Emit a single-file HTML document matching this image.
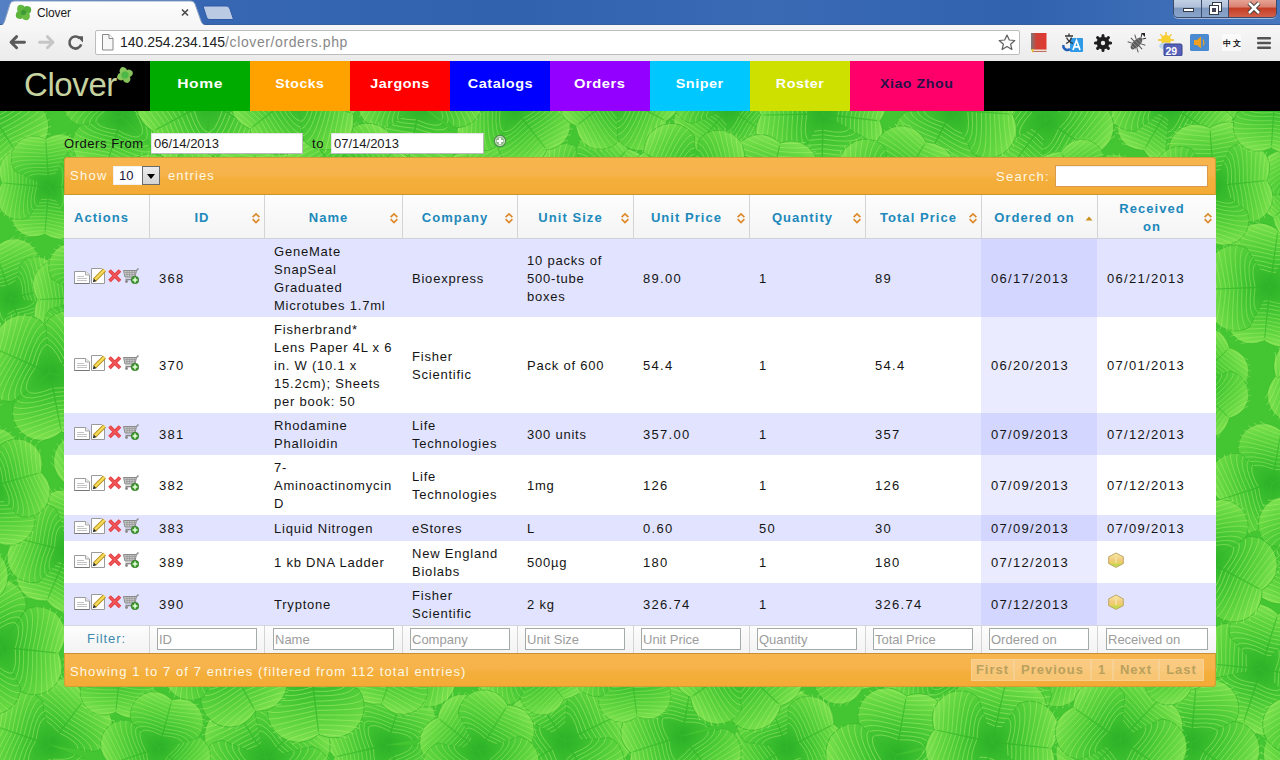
<!DOCTYPE html>
<html><head><meta charset="utf-8">
<style>
*{box-sizing:border-box;margin:0;padding:0}
html,body{width:1280px;height:760px;overflow:hidden;font-family:"Liberation Sans",sans-serif;}
body{position:relative;background:#57ce3b;}
.abs{position:absolute}
#frame{left:0;top:0;width:1280px;height:25px;background:linear-gradient(90deg,#5580c4 0%,#3868b4 12%,#3162ae 40%,#3a6ab4 60%,#3162ae 80%,#4676bd 100%);}
#toolbar{left:0;top:25px;width:1280px;height:36px;background:linear-gradient(#f7f7f7,#ebebeb);}
#omni{left:95px;top:30px;width:925px;height:25px;background:#fff;border:1px solid #bdbdbd;border-radius:2px;}
#url{left:120px;top:34px;font-size:14px;color:#222;white-space:nowrap;letter-spacing:0}
#url span{color:#888;letter-spacing:0.6px}
#nav{left:0;top:61px;width:1280px;height:50px;background:#000;}
.nav{position:absolute;top:61px;height:50px;width:100px;color:#fff;font-weight:bold;font-size:13px;text-align:center;line-height:45px;letter-spacing:0.5px;white-space:nowrap}
.nav span{display:inline-block}
#logo{left:24px;top:66px;font-size:33px;color:#c6d3a0;letter-spacing:-0.4px}
#bg{left:0;top:111px;width:1280px;height:649px;overflow:hidden;background:#57ce3b}
.t13{font-size:13px;letter-spacing:0.8px;white-space:nowrap}
.inp{background:#fff;border:1px solid #e4e4e4;border-right-color:#b8b8b8;border-bottom-color:#b8b8b8;font-size:13px;color:#1a1a1a;line-height:20px;padding-left:2px;white-space:nowrap}
.sel{background:#fff;border:1px solid #f0f0f0;font-size:13px;color:#111;line-height:17px}
.sel span{position:absolute;left:5px;top:0;color:#1a1040}
.sel i{position:absolute;right:-1px;top:-1px;width:18px;height:19px;background:linear-gradient(#ececec,#d4d4d4);border:1px solid #6a6a6a}
.sel i:after{content:"";position:absolute;left:4px;top:7px;border-left:4px solid transparent;border-right:4px solid transparent;border-top:5px solid #000}
.ohdr{background:linear-gradient(#f7b54e 0%,#f7b34b 45%,#f3ae3b 58%,#f4ab36 100%);border:1px solid #cfa035}
.wt{color:#fff8e4}
#tb{border-collapse:separate;border-spacing:0;table-layout:fixed;width:1152px;font-size:13px;color:#111}
#tb th{background:linear-gradient(#fdfdfd,#f4f4f4);color:#2088bb;font-weight:bold;border-left:1px solid #d3d3d8;border-bottom:1px solid #cfd0da;padding:0 0 0 10px;line-height:18px;text-align:center;vertical-align:middle;letter-spacing:1.05px;padding-top:1px;white-space:nowrap}
#tb th.f{border-left:none}
#tb .sw{position:relative;padding-right:20px;top:1px}
#tb .si,#tb .sa{position:absolute;right:0;top:50%;margin-top:-8px;width:16px;height:16px}
#tb td{padding:1px 10px 0 10px;line-height:18px;vertical-align:middle;letter-spacing:0.78px;white-space:nowrap;color:#141414}
#tb tr.odd td{background:#e2e4ff}
#tb tr.even td{background:#fff}
#tb tr.odd td.s1{background:#d3d6ff}
#tb tr.even td.s1{background:#eaebff}
#tb tfoot th{border-bottom:none;box-shadow:inset 0 1px 0 #d6d6de;background:linear-gradient(#fdfdfd,#f3f3f3);padding:0 0 0 7px;text-align:left}
#tb tfoot th.fl{font-weight:normal;color:#3d8ab0;text-align:center;padding:0;letter-spacing:0.9px}
#tb .fi{width:100px;height:22px;border:1px solid #a3aaa8;background:#fff;color:#9c9c9c;font-weight:normal;letter-spacing:0;font-size:13px;line-height:21px;padding-left:1px;border-radius:0}
#tb td.ic{padding:0 0 0 10px}
.icons{position:relative;top:-2px;height:16px;width:64px}
.icons svg{position:absolute;top:0}
.pg{height:22px;background:rgba(255,240,215,0.38);border:1px solid rgba(245,215,165,0.55);color:#b9a05c;font-weight:bold;font-size:13px;line-height:20px;text-align:center;letter-spacing:1px}
#tb td.n{letter-spacing:1.3px}
</style></head><body>
<!-- chrome frame -->
<div id="frame" class="abs"></div><div class="abs" style="left:0;top:24px;width:1280px;height:1px;background:#355f9e"></div>
<svg class="abs" style="left:0;top:0" width="240" height="26" viewBox="0 0 240 26">
<defs><linearGradient id="tabg" x1="0" y1="0" x2="0" y2="1"><stop offset="0" stop-color="#fdfdfd"/><stop offset="1" stop-color="#f6f6f6"/></linearGradient>
<linearGradient id="ntg" x1="0" y1="0" x2="0" y2="1"><stop offset="0" stop-color="#c5d6ec"/><stop offset="1" stop-color="#a9c0e0"/></linearGradient></defs>
<path d="M-1 26 C3 26 4 23 5 20 L10 4 C11 2 12 1 15 1 L190 1 C193 1 194 2 195 4 L201 21 C202 24 204 25.6 208 26 Z" fill="url(#tabg)" stroke="#8ea4c4" stroke-width="1"/>
<path d="M203 6 L226 6 C228 6 229 7 230 9 L233.5 19.5 L210 19.5 C208 19.5 207 18.5 206.5 17 Z" fill="#b9cae2" stroke="#2f5aa8" stroke-width="1"/>
<g transform="translate(23.5,12.5) rotate(12)"><circle cx="-3.2" cy="-3.2" r="3.9" fill="#62b83e"/><circle cx="3.2" cy="-3.2" r="3.9" fill="#56b03a"/><circle cx="-3.2" cy="3.2" r="3.9" fill="#5cb43c"/><circle cx="3.2" cy="3.2" r="3.9" fill="#68bc42"/><circle cx="0" cy="0" r="2.6" fill="#3e9a34"/></g>
<path d="M182 9.5l6 6M188 9.5l-6 6" stroke="#4a4a4a" stroke-width="1.6"/>
</svg>
<div class="abs" style="left:37px;top:6px;font-size:12px;color:#1a1a1a;letter-spacing:-0.15px">Clover</div>
<!-- window controls -->
<div class="abs" style="left:1173px;top:-1px;width:104px;height:19px;border:1px solid #3a4c6a;border-top:none;border-radius:0 0 5px 5px;overflow:hidden;box-shadow:0 1px 0 rgba(255,255,255,0.5)">
 <div class="abs" style="left:0;top:0;width:28px;height:18px;background:linear-gradient(#c6d3e6 0%,#aebfd8 45%,#7e98bf 50%,#8aa5cc 100%);border-right:1px solid #3a4c6a"></div>
 <div class="abs" style="left:28px;top:0;width:27px;height:18px;background:linear-gradient(#c6d3e6 0%,#aebfd8 45%,#7e98bf 50%,#8aa5cc 100%);border-right:1px solid #3a4c6a"></div>
 <div class="abs" style="left:55px;top:0;width:49px;height:18px;background:linear-gradient(#e8a89a 0%,#d98070 45%,#c43c24 50%,#d2604a 100%)"></div>
 <div class="abs" style="left:9px;top:9px;width:11px;height:4px;background:#fff;border:1px solid #333a48"></div>
 <div class="abs" style="left:39px;top:4px;width:8px;height:8px;border:2px solid #fff;outline:1px solid #333a48"></div>
 <div class="abs" style="left:36px;top:7px;width:8px;height:8px;border:2px solid #fff;background:#445;outline:1px solid #333a48"></div>
 <svg class="abs" style="left:72px;top:2px" width="16" height="14" viewBox="0 0 16 14"><path d="M3 2l10 10M13 2L3 12" stroke="#333" stroke-width="4.4"/><path d="M3 2l10 10M13 2L3 12" stroke="#fff" stroke-width="2.6"/></svg>
</div>
<!-- toolbar -->
<div id="toolbar" class="abs"></div>
<svg class="abs" style="left:0;top:25px" width="100" height="36" viewBox="0 0 100 36">
<path d="M11 17.2 L16.6 11.6 M11 17.2 L16.6 22.8 M11.5 17.2 H24.5" stroke="#5a5a5a" stroke-width="2.9" stroke-linecap="round" fill="none"/>
<path d="M53 17.2 L47.4 11.6 M53 17.2 L47.4 22.8 M52.5 17.2 H39.5" stroke="#c6c6c6" stroke-width="2.9" stroke-linecap="round" fill="none"/>
<path d="M81.2 19.3 A6 6 0 1 1 79.6 13.2" fill="none" stroke="#5a5a5a" stroke-width="2.6"/>
<path d="M76.6 11.2 L83 11.2 L83 17.4 Z" fill="#5a5a5a"/>
</svg>
<div id="omni" class="abs"></div>
<svg class="abs" style="left:100px;top:34px" width="16" height="18" viewBox="0 0 16 18"><path d="M2.5 0.5h6.5l4 4v11.5h-10.5z" fill="#f8f8f8" stroke="#8a8a8a"/><path d="M9 0.5v4h4" fill="#fff" stroke="#8a8a8a"/></svg>
<div id="url" class="abs">140.254.234.145<span>/clover/orders.php</span></div>
<svg class="abs" style="left:997px;top:33px" width="20" height="18" viewBox="0 0 20 18"><path d="M10 2 L12.3 7 L17.8 7.5 L13.6 11.2 L14.9 16.5 L10 13.6 L5.1 16.5 L6.4 11.2 L2.2 7.5 L7.7 7 Z" fill="#fcfcfc" stroke="#5e5e5e" stroke-width="1.2" stroke-linejoin="round"/></svg>
<svg class="abs" style="left:1025px;top:30px" width="255" height="26" viewBox="0 0 255 26">
<!-- red book -->
<defs><linearGradient id="bkg" x1="0" x2="1"><stop offset="0" stop-color="#7a7a7a"/><stop offset="0.35" stop-color="#d04036"/><stop offset="1" stop-color="#e03a30"/></linearGradient></defs>
<rect x="6" y="3" width="15.5" height="17" fill="url(#bkg)"/><rect x="8" y="19.5" width="13.5" height="1.6" fill="#f0e0d0"/><rect x="8" y="21" width="13.5" height="0.8" fill="#b05040"/><path d="M6 19l3 0l-1.5 4z" fill="#e8c030"/>
<!-- translate -->
<rect x="45" y="8" width="13" height="14" rx="1" fill="#2f9ae6"/><path d="M48 20L51.5 10.5L55 20M49.3 16.8h4.4" stroke="#fff" stroke-width="1.7" fill="none"/><path d="M40 6h8M44 3.5v3M41.5 7.5c1.5 3 3.5 5 6.5 6M46.5 7.5c-1 3-3 5-5.5 6" stroke="#333" stroke-width="1.3" fill="none"/><path d="M38.5 15a4 4 0 0 0 6.5 4" stroke="#1f5fb8" stroke-width="2.4" fill="none"/>
<!-- gear -->
<g transform="translate(78,13)"><circle r="6.3" fill="#1e1e1e"/><g stroke="#1e1e1e" stroke-width="3" stroke-linecap="round"><path d="M0 -7.6V7.6M-7.6 0H7.6M-5.4 -5.4L5.4 5.4M5.4 -5.4L-5.4 5.4"/></g><circle r="2.2" fill="#eee"/></g>
<!-- bug -->
<g transform="translate(111.5,13.5) rotate(-45)"><ellipse rx="7.5" ry="3.6" fill="#5a5a5a"/><path d="M-5 -3.5v7M-2 -3.6v7.2M1 -3.6v7.2M4 -3.2v6.4" stroke="#9a9a9a" stroke-width="0.8"/><path d="M-3 -3.5l-2 -4M0 -3.5l0 -4.5M3 -3.5l2 -4M-3 3.5l-2 4M0 3.5l0 4.5M3 3.5l2 4" stroke="#555" stroke-width="1"/><path d="M7.5 -1l3 -2M7.5 1l3 2" stroke="#333" stroke-width="1"/></g><path d="M116 3l4 0l0 4z" fill="#222"/>
<!-- weather -->
<g transform="translate(141,10)" stroke="#f5c020" stroke-width="1.3"><path d="M0 -8V8M-8 0H8M-5.6 -5.6L5.6 5.6M5.6 -5.6L-5.6 5.6"/></g><circle cx="141" cy="10" r="5" fill="#f8d030"/><ellipse cx="141" cy="16" rx="7" ry="3.5" fill="#bcd6ec"/><rect x="139" y="14" width="18" height="12" rx="1.5" fill="#5560b8" stroke="#3a3f8a" stroke-width="1"/><text x="140.5" y="24.5" font-size="10.5" font-weight="bold" fill="#fff" font-family="Liberation Sans">29</text>
<!-- speaker -->
<rect x="165" y="4" width="19" height="17" rx="1.5" fill="#4a8ad0"/><path d="M169 10h3l4-3.5v12l-4-3.5h-3z" fill="#f0a020"/><path d="M178 9.5c1.2 1.5 1.2 4.5 0 6" stroke="#f0a020" stroke-width="1.2" fill="none"/>
<!-- chinese -->
<rect x="197" y="4" width="19" height="17" fill="#fafafa"/><text x="198" y="16" font-size="8" font-weight="bold" fill="#111" font-family="Liberation Sans">中 文</text>
<!-- menu -->
<rect x="232" y="7" width="14" height="2.6" rx="1" fill="#545454"/><rect x="232" y="11.7" width="14" height="2.6" rx="1" fill="#545454"/><rect x="232" y="16.4" width="14" height="2.6" rx="1" fill="#545454"/>
</svg>
<!-- nav -->
<div id="nav" class="abs"></div>
<div id="logo" class="abs">Clover</div>
<svg class="abs" style="left:117px;top:67px" width="16" height="16" viewBox="0 0 16 16"><g transform="translate(8,8) rotate(22)"><circle cx="-3.2" cy="-3.2" r="3.6" fill="#8cc860"/><circle cx="3.2" cy="-3.2" r="3.6" fill="#86c45c"/><circle cx="-3.2" cy="3.2" r="3.6" fill="#8ac65e"/><circle cx="3.2" cy="3.2" r="3.6" fill="#84c25a"/><circle r="3.6" fill="#4cb848"/></g></svg>
<div class="nav" style="left:150px;width:100px;background:#00ab00;color:#fff"><span style="transform:scaleX(1.200)">Home</span></div>
<div class="nav" style="left:250px;width:100px;background:#ffa200;color:#fff"><span style="transform:scaleX(1.080)">Stocks</span></div>
<div class="nav" style="left:350px;width:100px;background:#ff0000;color:#fff"><span style="transform:scaleX(1.104)">Jargons</span></div>
<div class="nav" style="left:450px;width:100px;background:#0000ff;color:#fff"><span style="transform:scaleX(1.112)">Catalogs</span></div>
<div class="nav" style="left:550px;width:100px;background:#9400ff;color:#fff"><span style="transform:scaleX(1.130)">Orders</span></div>
<div class="nav" style="left:650px;width:100px;background:#00c8ff;color:#fff"><span style="transform:scaleX(1.106)">Sniper</span></div>
<div class="nav" style="left:750px;width:100px;background:#cde000;color:#fff"><span style="transform:scaleX(1.098)">Roster</span></div>
<div class="nav" style="left:850px;width:134px;background:#ff006a;color:#2a1048"><span style="transform:scaleX(1.090)">Xiao Zhou</span></div>
<svg class="abs" style="left:0;top:111px" width="1280" height="649" viewBox="0 111 1280 649">
<defs><radialGradient id="lf" cx="0.05" cy="0.5" r="1.05"><stop offset="0" stop-color="#2cb228"/><stop offset="0.4" stop-color="#46c834"/><stop offset="0.75" stop-color="#66d842"/><stop offset="1" stop-color="#8ae656"/></radialGradient><g id="lv"><path d="M0 0L32 -58A40 40 0 0 1 84 0A40 40 0 0 1 32 58Z" fill="url(#lf)" stroke="#38b82c" stroke-width="1"/><path d="M22 1Q28 31 19 36M28 1Q34 39 23 45M34 1Q40 45 29 53M41 1Q46 50 37 59M47 1Q53 54 46 63M53 1Q59 55 56 64M59 1Q66 54 66 63M65 1Q72 50 75 59M72 1Q78 45 83 53M78 1Q84 39 89 45M84 1Q90 31 93 36M22 -1Q28 -31 19 -36M28 -1Q34 -39 23 -45M34 -1Q40 -45 29 -53M41 -1Q46 -50 37 -59M47 -1Q53 -54 46 -63M53 -1Q59 -55 56 -64M59 -1Q66 -54 66 -63M65 -1Q72 -50 75 -59M72 -1Q78 -45 83 -53M78 -1Q84 -39 89 -45M84 -1Q90 -31 93 -36" fill="none" stroke="#aaf070" stroke-width="1.1" opacity="0.6"/><path d="M2 0H80" stroke="#34b42a" stroke-width="1.5" opacity="0.6"/></g></defs>
<rect x="0" y="111" width="1280" height="649" fill="#44c632"/>
<g transform="translate(387 745) rotate(55)"><use href="#lv" transform="rotate(7) scale(0.62)"/><use href="#lv" transform="rotate(112) scale(0.64)"/><use href="#lv" transform="rotate(232) scale(0.63)"/></g>
<g transform="translate(1270 287) rotate(274)"><use href="#lv" transform="rotate(4) scale(0.68)"/><use href="#lv" transform="rotate(82) scale(0.65)"/><use href="#lv" transform="rotate(182) scale(0.64)"/><use href="#lv" transform="rotate(264) scale(0.68)"/></g>
<g transform="translate(1031 655) rotate(295)"><use href="#lv" transform="rotate(3) scale(0.63)"/><use href="#lv" transform="rotate(86) scale(0.65)"/><use href="#lv" transform="rotate(188) scale(0.66)"/><use href="#lv" transform="rotate(276) scale(0.63)"/></g>
<g transform="translate(-57 378) rotate(179)"><use href="#lv" transform="rotate(5) scale(0.62)"/><use href="#lv" transform="rotate(114) scale(0.65)"/><use href="#lv" transform="rotate(232) scale(0.65)"/></g>
<g transform="translate(1272 483) rotate(279)"><use href="#lv" transform="rotate(1) scale(0.63)"/><use href="#lv" transform="rotate(117) scale(0.68)"/><use href="#lv" transform="rotate(243) scale(0.65)"/></g>
<g transform="translate(68 551) rotate(288)"><use href="#lv" transform="rotate(-4) scale(0.64)"/><use href="#lv" transform="rotate(86) scale(0.70)"/><use href="#lv" transform="rotate(185) scale(0.64)"/><use href="#lv" transform="rotate(266) scale(0.64)"/></g>
<g transform="translate(1014 186) rotate(238)"><use href="#lv" transform="rotate(-5) scale(0.59)"/><use href="#lv" transform="rotate(97) scale(0.59)"/><use href="#lv" transform="rotate(184) scale(0.61)"/><use href="#lv" transform="rotate(269) scale(0.60)"/></g>
<g transform="translate(729 108) rotate(131)"><use href="#lv" transform="rotate(-0) scale(0.61)"/><use href="#lv" transform="rotate(87) scale(0.60)"/><use href="#lv" transform="rotate(188) scale(0.62)"/><use href="#lv" transform="rotate(264) scale(0.59)"/></g>
<g transform="translate(1330 388) rotate(77)"><use href="#lv" transform="rotate(-3) scale(0.67)"/><use href="#lv" transform="rotate(115) scale(0.66)"/><use href="#lv" transform="rotate(239) scale(0.67)"/></g>
<g transform="translate(1261 669) rotate(190)"><use href="#lv" transform="rotate(-4) scale(0.67)"/><use href="#lv" transform="rotate(97) scale(0.68)"/><use href="#lv" transform="rotate(180) scale(0.65)"/><use href="#lv" transform="rotate(278) scale(0.69)"/></g>
<g transform="translate(947 666) rotate(52)"><use href="#lv" transform="rotate(5) scale(0.65)"/><use href="#lv" transform="rotate(129) scale(0.67)"/><use href="#lv" transform="rotate(235) scale(0.68)"/></g>
<g transform="translate(1153 485) rotate(118)"><use href="#lv" transform="rotate(10) scale(0.61)"/><use href="#lv" transform="rotate(88) scale(0.65)"/><use href="#lv" transform="rotate(175) scale(0.62)"/><use href="#lv" transform="rotate(276) scale(0.65)"/></g>
<g transform="translate(1191 743) rotate(268)"><use href="#lv" transform="rotate(7) scale(0.71)"/><use href="#lv" transform="rotate(126) scale(0.72)"/><use href="#lv" transform="rotate(240) scale(0.70)"/></g>
<g transform="translate(834 644) rotate(185)"><use href="#lv" transform="rotate(3) scale(0.64)"/><use href="#lv" transform="rotate(123) scale(0.63)"/><use href="#lv" transform="rotate(233) scale(0.63)"/></g>
<g transform="translate(1312 189) rotate(49)"><use href="#lv" transform="rotate(-8) scale(0.60)"/><use href="#lv" transform="rotate(95) scale(0.57)"/><use href="#lv" transform="rotate(183) scale(0.58)"/><use href="#lv" transform="rotate(270) scale(0.59)"/></g>
<g transform="translate(119 463) rotate(161)"><use href="#lv" transform="rotate(-2) scale(0.68)"/><use href="#lv" transform="rotate(125) scale(0.65)"/><use href="#lv" transform="rotate(237) scale(0.70)"/></g>
<g transform="translate(-15 104) rotate(301)"><use href="#lv" transform="rotate(-5) scale(0.72)"/><use href="#lv" transform="rotate(116) scale(0.73)"/><use href="#lv" transform="rotate(247) scale(0.67)"/></g>
<g transform="translate(1313 552) rotate(124)"><use href="#lv" transform="rotate(-3) scale(0.72)"/><use href="#lv" transform="rotate(126) scale(0.69)"/><use href="#lv" transform="rotate(246) scale(0.66)"/></g>
<g transform="translate(1170 105) rotate(123)"><use href="#lv" transform="rotate(-3) scale(0.62)"/><use href="#lv" transform="rotate(81) scale(0.66)"/><use href="#lv" transform="rotate(173) scale(0.65)"/><use href="#lv" transform="rotate(271) scale(0.67)"/></g>
<g transform="translate(-42 757) rotate(305)"><use href="#lv" transform="rotate(-7) scale(0.70)"/><use href="#lv" transform="rotate(112) scale(0.72)"/><use href="#lv" transform="rotate(236) scale(0.66)"/></g>
<g transform="translate(-10 487) rotate(78)"><use href="#lv" transform="rotate(6) scale(0.66)"/><use href="#lv" transform="rotate(95) scale(0.65)"/><use href="#lv" transform="rotate(175) scale(0.62)"/><use href="#lv" transform="rotate(266) scale(0.63)"/></g>
<g transform="translate(50 745) rotate(315)"><use href="#lv" transform="rotate(-8) scale(0.70)"/><use href="#lv" transform="rotate(128) scale(0.65)"/><use href="#lv" transform="rotate(244) scale(0.68)"/></g>
<g transform="translate(591 191) rotate(67)"><use href="#lv" transform="rotate(10) scale(0.70)"/><use href="#lv" transform="rotate(128) scale(0.63)"/><use href="#lv" transform="rotate(244) scale(0.66)"/></g>
<g transform="translate(1326 742) rotate(327)"><use href="#lv" transform="rotate(1) scale(0.65)"/><use href="#lv" transform="rotate(96) scale(0.70)"/><use href="#lv" transform="rotate(171) scale(0.67)"/><use href="#lv" transform="rotate(263) scale(0.70)"/></g>
<g transform="translate(1193 383) rotate(227)"><use href="#lv" transform="rotate(9) scale(0.63)"/><use href="#lv" transform="rotate(89) scale(0.60)"/><use href="#lv" transform="rotate(177) scale(0.60)"/><use href="#lv" transform="rotate(268) scale(0.59)"/></g>
<g transform="translate(1214 186) rotate(270)"><use href="#lv" transform="rotate(-4) scale(0.69)"/><use href="#lv" transform="rotate(84) scale(0.63)"/><use href="#lv" transform="rotate(188) scale(0.63)"/><use href="#lv" transform="rotate(268) scale(0.65)"/></g>
<g transform="translate(49 187) rotate(94)"><use href="#lv" transform="rotate(1) scale(0.56)"/><use href="#lv" transform="rotate(91) scale(0.56)"/><use href="#lv" transform="rotate(172) scale(0.57)"/><use href="#lv" transform="rotate(265) scale(0.58)"/></g>
<g transform="translate(122 117) rotate(105)"><use href="#lv" transform="rotate(3) scale(0.64)"/><use href="#lv" transform="rotate(125) scale(0.66)"/><use href="#lv" transform="rotate(236) scale(0.65)"/></g>
<g transform="translate(823 114) rotate(268)"><use href="#lv" transform="rotate(5) scale(0.71)"/><use href="#lv" transform="rotate(99) scale(0.68)"/><use href="#lv" transform="rotate(183) scale(0.74)"/><use href="#lv" transform="rotate(271) scale(0.74)"/></g>
<g transform="translate(208 102) rotate(34)"><use href="#lv" transform="rotate(-5) scale(0.76)"/><use href="#lv" transform="rotate(118) scale(0.74)"/><use href="#lv" transform="rotate(235) scale(0.71)"/></g>
<g transform="translate(957 827) rotate(312)"><use href="#lv" transform="rotate(3) scale(0.65)"/><use href="#lv" transform="rotate(116) scale(0.72)"/><use href="#lv" transform="rotate(234) scale(0.68)"/></g>
<g transform="translate(11 298) rotate(251)"><use href="#lv" transform="rotate(1) scale(0.62)"/><use href="#lv" transform="rotate(96) scale(0.56)"/><use href="#lv" transform="rotate(179) scale(0.58)"/><use href="#lv" transform="rotate(274) scale(0.60)"/></g>
<g transform="translate(173 212) rotate(94)"><use href="#lv" transform="rotate(-1) scale(0.65)"/><use href="#lv" transform="rotate(116) scale(0.68)"/><use href="#lv" transform="rotate(234) scale(0.71)"/></g>
<g transform="translate(488 200) rotate(357)"><use href="#lv" transform="rotate(3) scale(0.68)"/><use href="#lv" transform="rotate(120) scale(0.65)"/><use href="#lv" transform="rotate(248) scale(0.61)"/></g>
<g transform="translate(1046 120) rotate(130)"><use href="#lv" transform="rotate(-3) scale(0.72)"/><use href="#lv" transform="rotate(81) scale(0.74)"/><use href="#lv" transform="rotate(189) scale(0.70)"/><use href="#lv" transform="rotate(264) scale(0.71)"/></g>
<g transform="translate(400 653) rotate(287)"><use href="#lv" transform="rotate(5) scale(0.65)"/><use href="#lv" transform="rotate(92) scale(0.69)"/><use href="#lv" transform="rotate(183) scale(0.64)"/><use href="#lv" transform="rotate(279) scale(0.71)"/></g>
<g transform="translate(514 108) rotate(173)"><use href="#lv" transform="rotate(2) scale(0.64)"/><use href="#lv" transform="rotate(118) scale(0.69)"/><use href="#lv" transform="rotate(239) scale(0.63)"/></g>
<g transform="translate(787 748) rotate(60)"><use href="#lv" transform="rotate(2) scale(0.65)"/><use href="#lv" transform="rotate(89) scale(0.63)"/><use href="#lv" transform="rotate(189) scale(0.63)"/><use href="#lv" transform="rotate(273) scale(0.62)"/></g>
<g transform="translate(88 297) rotate(185)"><use href="#lv" transform="rotate(-8) scale(0.60)"/><use href="#lv" transform="rotate(82) scale(0.60)"/><use href="#lv" transform="rotate(183) scale(0.61)"/><use href="#lv" transform="rotate(276) scale(0.61)"/></g>
<g transform="translate(1209 562) rotate(30)"><use href="#lv" transform="rotate(-2) scale(0.71)"/><use href="#lv" transform="rotate(130) scale(0.69)"/><use href="#lv" transform="rotate(235) scale(0.67)"/></g>
<g transform="translate(253 211) rotate(179)"><use href="#lv" transform="rotate(-8) scale(0.65)"/><use href="#lv" transform="rotate(93) scale(0.69)"/><use href="#lv" transform="rotate(185) scale(0.69)"/><use href="#lv" transform="rotate(276) scale(0.65)"/></g>
<g transform="translate(266 758) rotate(232)"><use href="#lv" transform="rotate(6) scale(0.71)"/><use href="#lv" transform="rotate(85) scale(0.69)"/><use href="#lv" transform="rotate(175) scale(0.72)"/><use href="#lv" transform="rotate(269) scale(0.72)"/></g>
<g transform="translate(420 105) rotate(333)"><use href="#lv" transform="rotate(-2) scale(0.65)"/><use href="#lv" transform="rotate(129) scale(0.70)"/><use href="#lv" transform="rotate(234) scale(0.65)"/></g>
<g transform="translate(896 755) rotate(284)"><use href="#lv" transform="rotate(-4) scale(0.71)"/><use href="#lv" transform="rotate(129) scale(0.68)"/><use href="#lv" transform="rotate(235) scale(0.73)"/></g>
<g transform="translate(121 662) rotate(327)"><use href="#lv" transform="rotate(-1) scale(0.64)"/><use href="#lv" transform="rotate(129) scale(0.60)"/><use href="#lv" transform="rotate(235) scale(0.60)"/></g>
<g transform="translate(992 742) rotate(282)"><use href="#lv" transform="rotate(1) scale(0.74)"/><use href="#lv" transform="rotate(84) scale(0.71)"/><use href="#lv" transform="rotate(181) scale(0.74)"/><use href="#lv" transform="rotate(270) scale(0.70)"/></g>
<g transform="translate(311 670) rotate(325)"><use href="#lv" transform="rotate(-7) scale(0.75)"/><use href="#lv" transform="rotate(118) scale(0.77)"/><use href="#lv" transform="rotate(249) scale(0.72)"/></g>
<g transform="translate(349 188) rotate(150)"><use href="#lv" transform="rotate(-4) scale(0.68)"/><use href="#lv" transform="rotate(83) scale(0.73)"/><use href="#lv" transform="rotate(171) scale(0.72)"/><use href="#lv" transform="rotate(272) scale(0.73)"/></g>
<g transform="translate(1275 95) rotate(204)"><use href="#lv" transform="rotate(-4) scale(0.56)"/><use href="#lv" transform="rotate(122) scale(0.58)"/><use href="#lv" transform="rotate(250) scale(0.63)"/></g>
<g transform="translate(-0 647) rotate(248)"><use href="#lv" transform="rotate(-5) scale(0.71)"/><use href="#lv" transform="rotate(118) scale(0.70)"/><use href="#lv" transform="rotate(237) scale(0.71)"/></g>
<g transform="translate(565 741) rotate(235)"><use href="#lv" transform="rotate(1) scale(0.66)"/><use href="#lv" transform="rotate(99) scale(0.70)"/><use href="#lv" transform="rotate(182) scale(0.68)"/><use href="#lv" transform="rotate(274) scale(0.71)"/></g>
<g transform="translate(50 373) rotate(328)"><use href="#lv" transform="rotate(-5) scale(0.70)"/><use href="#lv" transform="rotate(111) scale(0.71)"/><use href="#lv" transform="rotate(236) scale(0.71)"/></g>
<g transform="translate(159 748) rotate(47)"><use href="#lv" transform="rotate(-7) scale(0.55)"/><use href="#lv" transform="rotate(115) scale(0.61)"/><use href="#lv" transform="rotate(238) scale(0.59)"/></g>
<g transform="translate(682 736) rotate(285)"><use href="#lv" transform="rotate(-5) scale(0.65)"/><use href="#lv" transform="rotate(126) scale(0.66)"/><use href="#lv" transform="rotate(237) scale(0.64)"/></g>
<g transform="translate(768 200) rotate(282)"><use href="#lv" transform="rotate(-0) scale(0.69)"/><use href="#lv" transform="rotate(97) scale(0.66)"/><use href="#lv" transform="rotate(183) scale(0.66)"/><use href="#lv" transform="rotate(263) scale(0.68)"/></g>
<g transform="translate(1084 195) rotate(233)"><use href="#lv" transform="rotate(9) scale(0.58)"/><use href="#lv" transform="rotate(121) scale(0.60)"/><use href="#lv" transform="rotate(235) scale(0.64)"/></g>
<g transform="translate(737 665) rotate(52)"><use href="#lv" transform="rotate(-9) scale(0.71)"/><use href="#lv" transform="rotate(93) scale(0.67)"/><use href="#lv" transform="rotate(188) scale(0.71)"/><use href="#lv" transform="rotate(264) scale(0.73)"/></g>
<g transform="translate(1120 740) rotate(307)"><use href="#lv" transform="rotate(7) scale(0.68)"/><use href="#lv" transform="rotate(87) scale(0.70)"/><use href="#lv" transform="rotate(189) scale(0.69)"/><use href="#lv" transform="rotate(268) scale(0.68)"/></g>
<g transform="translate(-63 574) rotate(295)"><use href="#lv" transform="rotate(7) scale(0.70)"/><use href="#lv" transform="rotate(91) scale(0.74)"/><use href="#lv" transform="rotate(175) scale(0.71)"/><use href="#lv" transform="rotate(273) scale(0.72)"/></g>
<g transform="translate(617 95) rotate(147)"><use href="#lv" transform="rotate(-4) scale(0.61)"/><use href="#lv" transform="rotate(110) scale(0.64)"/><use href="#lv" transform="rotate(241) scale(0.66)"/></g>
<g transform="translate(1162 648) rotate(56)"><use href="#lv" transform="rotate(-1) scale(0.60)"/><use href="#lv" transform="rotate(127) scale(0.60)"/><use href="#lv" transform="rotate(239) scale(0.61)"/></g>
<g transform="translate(535 661) rotate(53)"><use href="#lv" transform="rotate(0) scale(0.57)"/><use href="#lv" transform="rotate(120) scale(0.64)"/><use href="#lv" transform="rotate(250) scale(0.60)"/></g>
<g transform="translate(693 182) rotate(96)"><use href="#lv" transform="rotate(-4) scale(0.64)"/><use href="#lv" transform="rotate(115) scale(0.68)"/><use href="#lv" transform="rotate(243) scale(0.65)"/></g>
<g transform="translate(952 110) rotate(120)"><use href="#lv" transform="rotate(-3) scale(0.69)"/><use href="#lv" transform="rotate(124) scale(0.71)"/><use href="#lv" transform="rotate(244) scale(0.72)"/></g>
<g transform="translate(896 190) rotate(292)"><use href="#lv" transform="rotate(10) scale(0.67)"/><use href="#lv" transform="rotate(94) scale(0.64)"/><use href="#lv" transform="rotate(182) scale(0.63)"/><use href="#lv" transform="rotate(262) scale(0.68)"/></g>
<g transform="translate(226 658) rotate(291)"><use href="#lv" transform="rotate(7) scale(0.72)"/><use href="#lv" transform="rotate(130) scale(0.72)"/><use href="#lv" transform="rotate(250) scale(0.68)"/></g>
<g transform="translate(296 93) rotate(136)"><use href="#lv" transform="rotate(6) scale(0.69)"/><use href="#lv" transform="rotate(126) scale(0.68)"/><use href="#lv" transform="rotate(244) scale(0.72)"/></g>
<g transform="translate(479 751) rotate(216)"><use href="#lv" transform="rotate(3) scale(0.63)"/><use href="#lv" transform="rotate(86) scale(0.64)"/><use href="#lv" transform="rotate(185) scale(0.64)"/><use href="#lv" transform="rotate(274) scale(0.63)"/></g>
<g transform="translate(631 668) rotate(75)"><use href="#lv" transform="rotate(8) scale(0.58)"/><use href="#lv" transform="rotate(122) scale(0.61)"/><use href="#lv" transform="rotate(242) scale(0.58)"/></g>
</svg>
<!-- orders from -->
<div class="abs t13" style="left:64px;top:135px;line-height:18px;color:#111;letter-spacing:0.55px">Orders From</div>
<div class="abs inp" style="left:151px;top:133px;width:152px;height:21px"><span>06/14/2013</span></div>
<div class="abs t13" style="left:312px;top:135px;line-height:18px;color:#111;letter-spacing:0.55px">to</div>
<div class="abs inp" style="left:331px;top:133px;width:153px;height:21px"><span>07/14/2013</span></div>
<svg class="abs" style="left:493px;top:134px" width="14" height="14" viewBox="0 0 14 14"><circle cx="7" cy="7" r="5.6" fill="#8fb68a" stroke="#4f8a4a" stroke-width="1.2"/><circle cx="7" cy="7" r="4.6" fill="none" stroke="#d8ecd4" stroke-width="0.8"/><path d="M7 3.8v6.4M3.8 7h6.4" stroke="#fff" stroke-width="2.2"/></svg>

<!-- top toolbar orange -->
<div class="abs ohdr" style="left:64px;top:157px;width:1152px;height:38px;border-radius:3px 3px 0 0;border-bottom-color:#c69830"></div>
<div class="abs t13 wt" style="left:70px;top:167px;line-height:18px;letter-spacing:1.3px">Show</div>
<div class="abs sel" style="left:113px;top:166px;width:47px;height:19px"><span>10</span><i></i></div>
<div class="abs t13 wt" style="left:168px;top:167px;line-height:18px;letter-spacing:1.13px">entries</div>
<div class="abs t13 wt" style="left:996px;top:168px;line-height:18px;letter-spacing:1.32px">Search:</div>
<div class="abs" style="left:1055px;top:165px;width:153px;height:22px;background:#fff;border:1px solid #d99a4a;box-shadow:inset 0 1px 1px #eee"></div>

<!-- table -->
<table id="tb" class="abs" style="left:64px;top:195px">
<colgroup><col style="width:85px"><col style="width:115px"><col style="width:138px"><col style="width:115px"><col style="width:116px"><col style="width:116px"><col style="width:116px"><col style="width:116px"><col style="width:116px"><col style="width:119px"></colgroup>
<thead><tr style="height:44px">
<th class="f"><div class="sw" style="padding-right:20px"><span class="ht">Actions</span></div></th>
<th><div class="sw"><span class="ht">ID</span><svg class="si" width="16" height="16" viewBox="0 0 16 16"><path d="M4.6 7.2L8 3.9L11.4 7.2M4.6 9.2L8 12.5L11.4 9.2" fill="none" stroke="#dd8a2a" stroke-width="1.7"/></svg></div></th>
<th><div class="sw"><span class="ht" style="transform:scaleX(1.17)">Name</span><svg class="si" width="16" height="16" viewBox="0 0 16 16"><path d="M4.6 7.2L8 3.9L11.4 7.2M4.6 9.2L8 12.5L11.4 9.2" fill="none" stroke="#dd8a2a" stroke-width="1.7"/></svg></div></th>
<th><div class="sw"><span class="ht">Company</span><svg class="si" width="16" height="16" viewBox="0 0 16 16"><path d="M4.6 7.2L8 3.9L11.4 7.2M4.6 9.2L8 12.5L11.4 9.2" fill="none" stroke="#dd8a2a" stroke-width="1.7"/></svg></div></th>
<th><div class="sw"><span class="ht">Unit Size</span><svg class="si" width="16" height="16" viewBox="0 0 16 16"><path d="M4.6 7.2L8 3.9L11.4 7.2M4.6 9.2L8 12.5L11.4 9.2" fill="none" stroke="#dd8a2a" stroke-width="1.7"/></svg></div></th>
<th><div class="sw"><span class="ht" style="transform:scaleX(1.09)">Unit Price</span><svg class="si" width="16" height="16" viewBox="0 0 16 16"><path d="M4.6 7.2L8 3.9L11.4 7.2M4.6 9.2L8 12.5L11.4 9.2" fill="none" stroke="#dd8a2a" stroke-width="1.7"/></svg></div></th>
<th><div class="sw"><span class="ht">Quantity</span><svg class="si" width="16" height="16" viewBox="0 0 16 16"><path d="M4.6 7.2L8 3.9L11.4 7.2M4.6 9.2L8 12.5L11.4 9.2" fill="none" stroke="#dd8a2a" stroke-width="1.7"/></svg></div></th>
<th><div class="sw"><span class="ht">Total Price</span><svg class="si" width="16" height="16" viewBox="0 0 16 16"><path d="M4.6 7.2L8 3.9L11.4 7.2M4.6 9.2L8 12.5L11.4 9.2" fill="none" stroke="#dd8a2a" stroke-width="1.7"/></svg></div></th>
<th><div class="sw"><span class="ht">Ordered on</span><svg class="sa" width="16" height="16" viewBox="0 0 16 16"><path d="M4.5 10.5L8 6.5L11.5 10.5Z" fill="#c9901c"/></svg></div></th>
<th><div class="sw"><span class="ht">Received<br>on</span><svg class="si" width="16" height="16" viewBox="0 0 16 16"><path d="M4.6 7.2L8 3.9L11.4 7.2M4.6 9.2L8 12.5L11.4 9.2" fill="none" stroke="#dd8a2a" stroke-width="1.7"/></svg></div></th>
</tr></thead>
<tbody>
<tr class="odd" style="height:78px"><td class="ic"><div class="icons">
<svg style="left:0" width="16" height="16" viewBox="0 0 16 16"><path d="M0.5 3.5h11l4 3.5v8.5h-15z" fill="#fff" stroke="#9a9a9a"/><path d="M11.5 3.5v3.5h4" fill="#eee" stroke="#aaa"/><path d="M0.5 15.5h15" stroke="#777"/><path d="M3 8.5h7M3 10.5h10M3 12.5h10" stroke="#c4c4c4"/></svg>
<svg style="left:17px" width="16" height="16" viewBox="0 0 16 16"><path d="M0.5 0.5h10l3 3v12h-13z" fill="#fff" stroke="#9a9a9a"/><path d="M3.5 12L13.5 2" stroke="#b8901c" stroke-width="4.2"/><path d="M3.5 12L13.5 2" stroke="#f6dc5a" stroke-width="2.4"/><path d="M1.8 14.2L2.8 10.6L5.4 13.2Z" fill="#2a2a2a"/></svg>
<svg style="left:33px" width="16" height="16" viewBox="0 0 16 16"><path d="M2.5 2.5L13 13M13 2.5L2.5 13" stroke="#e33b40" stroke-width="3.6"/><path d="M2.5 2.5L13 13M13 2.5L2.5 13" stroke="#f25a5a" stroke-width="1.5"/></svg>
<svg style="left:49px" width="16" height="16" viewBox="0 0 16 16"><path d="M0.5 2.5h13l-1.5 6.5h-10z" fill="#c8c8c8" stroke="#8a8a8a"/><path d="M2 4.5h11M2.5 6.5h10M4 3v6M6.5 3v6M9 3v6M11.5 3v6" stroke="#9a9a9a" stroke-width="0.8"/><path d="M13.5 2.5l2-2" stroke="#8a8a8a" stroke-width="1.4"/><path d="M2.5 11.5h8" stroke="#8a8a8a" stroke-width="1.6"/><circle cx="3.5" cy="13.5" r="1.4" fill="#888"/><circle cx="12" cy="12" r="3.8" fill="#3d9a2c" stroke="#2a6a20" stroke-width="0.6"/><path d="M12 9.6v4.8M9.6 12h4.8" stroke="#e8ffe0" stroke-width="1.5"/></svg>
</div></td><td class="n">368</td><td>GeneMate<br>SnapSeal<br>Graduated<br>Microtubes 1.7ml</td><td>Bioexpress</td><td>10 packs of<br>500-tube<br>boxes</td><td class="n">89.00</td><td class="n">1</td><td class="n">89</td><td class="n s1">06/17/2013</td><td class="n">06/21/2013</td></tr>
<tr class="even" style="height:96px"><td class="ic"><div class="icons">
<svg style="left:0" width="16" height="16" viewBox="0 0 16 16"><path d="M0.5 3.5h11l4 3.5v8.5h-15z" fill="#fff" stroke="#9a9a9a"/><path d="M11.5 3.5v3.5h4" fill="#eee" stroke="#aaa"/><path d="M0.5 15.5h15" stroke="#777"/><path d="M3 8.5h7M3 10.5h10M3 12.5h10" stroke="#c4c4c4"/></svg>
<svg style="left:17px" width="16" height="16" viewBox="0 0 16 16"><path d="M0.5 0.5h10l3 3v12h-13z" fill="#fff" stroke="#9a9a9a"/><path d="M3.5 12L13.5 2" stroke="#b8901c" stroke-width="4.2"/><path d="M3.5 12L13.5 2" stroke="#f6dc5a" stroke-width="2.4"/><path d="M1.8 14.2L2.8 10.6L5.4 13.2Z" fill="#2a2a2a"/></svg>
<svg style="left:33px" width="16" height="16" viewBox="0 0 16 16"><path d="M2.5 2.5L13 13M13 2.5L2.5 13" stroke="#e33b40" stroke-width="3.6"/><path d="M2.5 2.5L13 13M13 2.5L2.5 13" stroke="#f25a5a" stroke-width="1.5"/></svg>
<svg style="left:49px" width="16" height="16" viewBox="0 0 16 16"><path d="M0.5 2.5h13l-1.5 6.5h-10z" fill="#c8c8c8" stroke="#8a8a8a"/><path d="M2 4.5h11M2.5 6.5h10M4 3v6M6.5 3v6M9 3v6M11.5 3v6" stroke="#9a9a9a" stroke-width="0.8"/><path d="M13.5 2.5l2-2" stroke="#8a8a8a" stroke-width="1.4"/><path d="M2.5 11.5h8" stroke="#8a8a8a" stroke-width="1.6"/><circle cx="3.5" cy="13.5" r="1.4" fill="#888"/><circle cx="12" cy="12" r="3.8" fill="#3d9a2c" stroke="#2a6a20" stroke-width="0.6"/><path d="M12 9.6v4.8M9.6 12h4.8" stroke="#e8ffe0" stroke-width="1.5"/></svg>
</div></td><td class="n">370</td><td>Fisherbrand*<br>Lens Paper 4L x 6<br>in. W (10.1 x<br>15.2cm); Sheets<br>per book: 50</td><td>Fisher<br>Scientific</td><td>Pack of 600</td><td class="n">54.4</td><td class="n">1</td><td class="n">54.4</td><td class="n s1">06/20/2013</td><td class="n">07/01/2013</td></tr>
<tr class="odd" style="height:42px"><td class="ic"><div class="icons">
<svg style="left:0" width="16" height="16" viewBox="0 0 16 16"><path d="M0.5 3.5h11l4 3.5v8.5h-15z" fill="#fff" stroke="#9a9a9a"/><path d="M11.5 3.5v3.5h4" fill="#eee" stroke="#aaa"/><path d="M0.5 15.5h15" stroke="#777"/><path d="M3 8.5h7M3 10.5h10M3 12.5h10" stroke="#c4c4c4"/></svg>
<svg style="left:17px" width="16" height="16" viewBox="0 0 16 16"><path d="M0.5 0.5h10l3 3v12h-13z" fill="#fff" stroke="#9a9a9a"/><path d="M3.5 12L13.5 2" stroke="#b8901c" stroke-width="4.2"/><path d="M3.5 12L13.5 2" stroke="#f6dc5a" stroke-width="2.4"/><path d="M1.8 14.2L2.8 10.6L5.4 13.2Z" fill="#2a2a2a"/></svg>
<svg style="left:33px" width="16" height="16" viewBox="0 0 16 16"><path d="M2.5 2.5L13 13M13 2.5L2.5 13" stroke="#e33b40" stroke-width="3.6"/><path d="M2.5 2.5L13 13M13 2.5L2.5 13" stroke="#f25a5a" stroke-width="1.5"/></svg>
<svg style="left:49px" width="16" height="16" viewBox="0 0 16 16"><path d="M0.5 2.5h13l-1.5 6.5h-10z" fill="#c8c8c8" stroke="#8a8a8a"/><path d="M2 4.5h11M2.5 6.5h10M4 3v6M6.5 3v6M9 3v6M11.5 3v6" stroke="#9a9a9a" stroke-width="0.8"/><path d="M13.5 2.5l2-2" stroke="#8a8a8a" stroke-width="1.4"/><path d="M2.5 11.5h8" stroke="#8a8a8a" stroke-width="1.6"/><circle cx="3.5" cy="13.5" r="1.4" fill="#888"/><circle cx="12" cy="12" r="3.8" fill="#3d9a2c" stroke="#2a6a20" stroke-width="0.6"/><path d="M12 9.6v4.8M9.6 12h4.8" stroke="#e8ffe0" stroke-width="1.5"/></svg>
</div></td><td class="n">381</td><td>Rhodamine<br>Phalloidin</td><td>Life<br>Technologies</td><td>300 units</td><td class="n">357.00</td><td class="n">1</td><td class="n">357</td><td class="n s1">07/09/2013</td><td class="n">07/12/2013</td></tr>
<tr class="even" style="height:60px"><td class="ic"><div class="icons">
<svg style="left:0" width="16" height="16" viewBox="0 0 16 16"><path d="M0.5 3.5h11l4 3.5v8.5h-15z" fill="#fff" stroke="#9a9a9a"/><path d="M11.5 3.5v3.5h4" fill="#eee" stroke="#aaa"/><path d="M0.5 15.5h15" stroke="#777"/><path d="M3 8.5h7M3 10.5h10M3 12.5h10" stroke="#c4c4c4"/></svg>
<svg style="left:17px" width="16" height="16" viewBox="0 0 16 16"><path d="M0.5 0.5h10l3 3v12h-13z" fill="#fff" stroke="#9a9a9a"/><path d="M3.5 12L13.5 2" stroke="#b8901c" stroke-width="4.2"/><path d="M3.5 12L13.5 2" stroke="#f6dc5a" stroke-width="2.4"/><path d="M1.8 14.2L2.8 10.6L5.4 13.2Z" fill="#2a2a2a"/></svg>
<svg style="left:33px" width="16" height="16" viewBox="0 0 16 16"><path d="M2.5 2.5L13 13M13 2.5L2.5 13" stroke="#e33b40" stroke-width="3.6"/><path d="M2.5 2.5L13 13M13 2.5L2.5 13" stroke="#f25a5a" stroke-width="1.5"/></svg>
<svg style="left:49px" width="16" height="16" viewBox="0 0 16 16"><path d="M0.5 2.5h13l-1.5 6.5h-10z" fill="#c8c8c8" stroke="#8a8a8a"/><path d="M2 4.5h11M2.5 6.5h10M4 3v6M6.5 3v6M9 3v6M11.5 3v6" stroke="#9a9a9a" stroke-width="0.8"/><path d="M13.5 2.5l2-2" stroke="#8a8a8a" stroke-width="1.4"/><path d="M2.5 11.5h8" stroke="#8a8a8a" stroke-width="1.6"/><circle cx="3.5" cy="13.5" r="1.4" fill="#888"/><circle cx="12" cy="12" r="3.8" fill="#3d9a2c" stroke="#2a6a20" stroke-width="0.6"/><path d="M12 9.6v4.8M9.6 12h4.8" stroke="#e8ffe0" stroke-width="1.5"/></svg>
</div></td><td class="n">382</td><td>7-<br>Aminoactinomycin<br>D</td><td>Life<br>Technologies</td><td>1mg</td><td class="n">126</td><td class="n">1</td><td class="n">126</td><td class="n s1">07/09/2013</td><td class="n">07/12/2013</td></tr>
<tr class="odd" style="height:26px"><td class="ic"><div class="icons">
<svg style="left:0" width="16" height="16" viewBox="0 0 16 16"><path d="M0.5 3.5h11l4 3.5v8.5h-15z" fill="#fff" stroke="#9a9a9a"/><path d="M11.5 3.5v3.5h4" fill="#eee" stroke="#aaa"/><path d="M0.5 15.5h15" stroke="#777"/><path d="M3 8.5h7M3 10.5h10M3 12.5h10" stroke="#c4c4c4"/></svg>
<svg style="left:17px" width="16" height="16" viewBox="0 0 16 16"><path d="M0.5 0.5h10l3 3v12h-13z" fill="#fff" stroke="#9a9a9a"/><path d="M3.5 12L13.5 2" stroke="#b8901c" stroke-width="4.2"/><path d="M3.5 12L13.5 2" stroke="#f6dc5a" stroke-width="2.4"/><path d="M1.8 14.2L2.8 10.6L5.4 13.2Z" fill="#2a2a2a"/></svg>
<svg style="left:33px" width="16" height="16" viewBox="0 0 16 16"><path d="M2.5 2.5L13 13M13 2.5L2.5 13" stroke="#e33b40" stroke-width="3.6"/><path d="M2.5 2.5L13 13M13 2.5L2.5 13" stroke="#f25a5a" stroke-width="1.5"/></svg>
<svg style="left:49px" width="16" height="16" viewBox="0 0 16 16"><path d="M0.5 2.5h13l-1.5 6.5h-10z" fill="#c8c8c8" stroke="#8a8a8a"/><path d="M2 4.5h11M2.5 6.5h10M4 3v6M6.5 3v6M9 3v6M11.5 3v6" stroke="#9a9a9a" stroke-width="0.8"/><path d="M13.5 2.5l2-2" stroke="#8a8a8a" stroke-width="1.4"/><path d="M2.5 11.5h8" stroke="#8a8a8a" stroke-width="1.6"/><circle cx="3.5" cy="13.5" r="1.4" fill="#888"/><circle cx="12" cy="12" r="3.8" fill="#3d9a2c" stroke="#2a6a20" stroke-width="0.6"/><path d="M12 9.6v4.8M9.6 12h4.8" stroke="#e8ffe0" stroke-width="1.5"/></svg>
</div></td><td class="n">383</td><td>Liquid Nitrogen</td><td>eStores</td><td>L</td><td class="n">0.60</td><td class="n">50</td><td class="n">30</td><td class="n s1">07/09/2013</td><td class="n">07/09/2013</td></tr>
<tr class="even" style="height:42px"><td class="ic"><div class="icons">
<svg style="left:0" width="16" height="16" viewBox="0 0 16 16"><path d="M0.5 3.5h11l4 3.5v8.5h-15z" fill="#fff" stroke="#9a9a9a"/><path d="M11.5 3.5v3.5h4" fill="#eee" stroke="#aaa"/><path d="M0.5 15.5h15" stroke="#777"/><path d="M3 8.5h7M3 10.5h10M3 12.5h10" stroke="#c4c4c4"/></svg>
<svg style="left:17px" width="16" height="16" viewBox="0 0 16 16"><path d="M0.5 0.5h10l3 3v12h-13z" fill="#fff" stroke="#9a9a9a"/><path d="M3.5 12L13.5 2" stroke="#b8901c" stroke-width="4.2"/><path d="M3.5 12L13.5 2" stroke="#f6dc5a" stroke-width="2.4"/><path d="M1.8 14.2L2.8 10.6L5.4 13.2Z" fill="#2a2a2a"/></svg>
<svg style="left:33px" width="16" height="16" viewBox="0 0 16 16"><path d="M2.5 2.5L13 13M13 2.5L2.5 13" stroke="#e33b40" stroke-width="3.6"/><path d="M2.5 2.5L13 13M13 2.5L2.5 13" stroke="#f25a5a" stroke-width="1.5"/></svg>
<svg style="left:49px" width="16" height="16" viewBox="0 0 16 16"><path d="M0.5 2.5h13l-1.5 6.5h-10z" fill="#c8c8c8" stroke="#8a8a8a"/><path d="M2 4.5h11M2.5 6.5h10M4 3v6M6.5 3v6M9 3v6M11.5 3v6" stroke="#9a9a9a" stroke-width="0.8"/><path d="M13.5 2.5l2-2" stroke="#8a8a8a" stroke-width="1.4"/><path d="M2.5 11.5h8" stroke="#8a8a8a" stroke-width="1.6"/><circle cx="3.5" cy="13.5" r="1.4" fill="#888"/><circle cx="12" cy="12" r="3.8" fill="#3d9a2c" stroke="#2a6a20" stroke-width="0.6"/><path d="M12 9.6v4.8M9.6 12h4.8" stroke="#e8ffe0" stroke-width="1.5"/></svg>
</div></td><td class="n">389</td><td>1 kb DNA Ladder</td><td>New England<br>Biolabs</td><td>500&micro;g</td><td class="n">180</td><td class="n">1</td><td class="n">180</td><td class="n s1">07/12/2013</td><td><svg width="16" height="16" viewBox="0 0 16 16" style="position:relative;top:0px;left:1px"><defs><linearGradient id="bxg" x1="0" y1="0" x2="0" y2="1"><stop offset="0" stop-color="#f6f0a8"/><stop offset="0.45" stop-color="#f2cc80"/><stop offset="0.7" stop-color="#e8d060"/><stop offset="0.85" stop-color="#b8dc48"/><stop offset="1" stop-color="#e0e890"/></linearGradient></defs><path d="M8 1L15.3 4.8V11.6L8 15.4L0.7 11.6V4.8Z" fill="url(#bxg)" stroke="#bfa466" stroke-width="1"/><path d="M8 5v6" stroke="#f8f0c0" stroke-width="1"/></svg></td></tr>
<tr class="odd" style="height:42px"><td class="ic"><div class="icons">
<svg style="left:0" width="16" height="16" viewBox="0 0 16 16"><path d="M0.5 3.5h11l4 3.5v8.5h-15z" fill="#fff" stroke="#9a9a9a"/><path d="M11.5 3.5v3.5h4" fill="#eee" stroke="#aaa"/><path d="M0.5 15.5h15" stroke="#777"/><path d="M3 8.5h7M3 10.5h10M3 12.5h10" stroke="#c4c4c4"/></svg>
<svg style="left:17px" width="16" height="16" viewBox="0 0 16 16"><path d="M0.5 0.5h10l3 3v12h-13z" fill="#fff" stroke="#9a9a9a"/><path d="M3.5 12L13.5 2" stroke="#b8901c" stroke-width="4.2"/><path d="M3.5 12L13.5 2" stroke="#f6dc5a" stroke-width="2.4"/><path d="M1.8 14.2L2.8 10.6L5.4 13.2Z" fill="#2a2a2a"/></svg>
<svg style="left:33px" width="16" height="16" viewBox="0 0 16 16"><path d="M2.5 2.5L13 13M13 2.5L2.5 13" stroke="#e33b40" stroke-width="3.6"/><path d="M2.5 2.5L13 13M13 2.5L2.5 13" stroke="#f25a5a" stroke-width="1.5"/></svg>
<svg style="left:49px" width="16" height="16" viewBox="0 0 16 16"><path d="M0.5 2.5h13l-1.5 6.5h-10z" fill="#c8c8c8" stroke="#8a8a8a"/><path d="M2 4.5h11M2.5 6.5h10M4 3v6M6.5 3v6M9 3v6M11.5 3v6" stroke="#9a9a9a" stroke-width="0.8"/><path d="M13.5 2.5l2-2" stroke="#8a8a8a" stroke-width="1.4"/><path d="M2.5 11.5h8" stroke="#8a8a8a" stroke-width="1.6"/><circle cx="3.5" cy="13.5" r="1.4" fill="#888"/><circle cx="12" cy="12" r="3.8" fill="#3d9a2c" stroke="#2a6a20" stroke-width="0.6"/><path d="M12 9.6v4.8M9.6 12h4.8" stroke="#e8ffe0" stroke-width="1.5"/></svg>
</div></td><td class="n">390</td><td>Tryptone</td><td>Fisher<br>Scientific</td><td>2 kg</td><td class="n">326.74</td><td class="n">1</td><td class="n">326.74</td><td class="n s1">07/12/2013</td><td><svg width="16" height="16" viewBox="0 0 16 16" style="position:relative;top:0px;left:1px"><defs><linearGradient id="bxg" x1="0" y1="0" x2="0" y2="1"><stop offset="0" stop-color="#f6f0a8"/><stop offset="0.45" stop-color="#f2cc80"/><stop offset="0.7" stop-color="#e8d060"/><stop offset="0.85" stop-color="#b8dc48"/><stop offset="1" stop-color="#e0e890"/></linearGradient></defs><path d="M8 1L15.3 4.8V11.6L8 15.4L0.7 11.6V4.8Z" fill="url(#bxg)" stroke="#bfa466" stroke-width="1"/><path d="M8 5v6" stroke="#f8f0c0" stroke-width="1"/></svg></td></tr>
</tbody>
<tfoot><tr style="height:28px">
<th class="f fl">Filter:</th>
<th><div class="fi">ID</div></th>
<th><div class="fi" style="width:121px;margin-left:1px">Name</div></th>
<th><div class="fi">Company</div></th>
<th><div class="fi">Unit Size</div></th>
<th><div class="fi">Unit Price</div></th>
<th><div class="fi">Quantity</div></th>
<th><div class="fi">Total Price</div></th>
<th><div class="fi">Ordered on</div></th>
<th><div class="fi" style="width:102px;margin-left:1px">Received on</div></th>
</tr></tfoot>
</table>

<!-- footer -->
<div class="abs ohdr" style="left:64px;top:653px;width:1152px;height:34px;border-radius:0 0 3px 3px;border-top-color:#c98f38"></div>
<div class="abs t13 wt" style="left:70px;top:663px;line-height:18px;letter-spacing:1.09px">Showing 1 to 7 of 7 entries (filtered from 112 total entries)</div>
<div class="abs pg" style="left:971px;top:659px;width:43px">First</div>
<div class="abs pg" style="left:1014px;top:659px;width:77px">Previous</div>
<div class="abs pg" style="left:1091px;top:659px;width:22px">1</div>
<div class="abs pg" style="left:1113px;top:659px;width:46px">Next</div>
<div class="abs pg" style="left:1159px;top:659px;width:45px">Last</div>

</body></html>
